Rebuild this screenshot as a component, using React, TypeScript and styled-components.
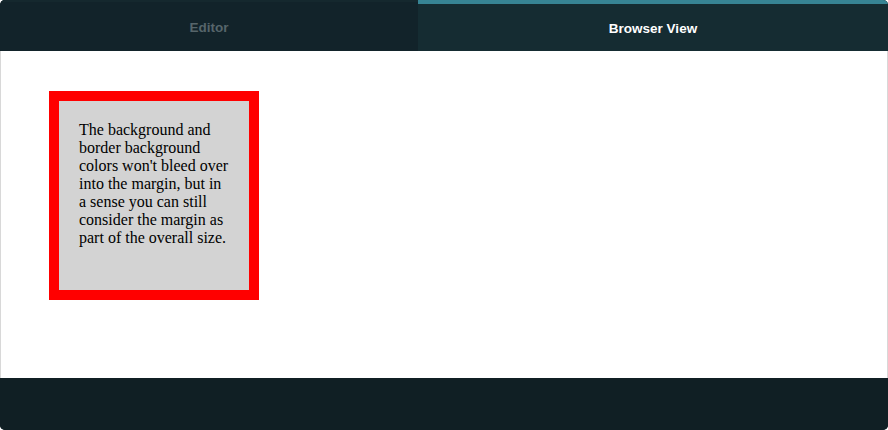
import styled, { createGlobalStyle } from "styled-components";

const GlobalStyle = createGlobalStyle`
  html, body {
    margin: 0;
    padding: 0;
    background: #ffffff;
  }
  #root {
    width: 888px;
    height: 430px;
  }
`;

// whole widget: dark frame with rounded corners
const Frame = styled.div`
  width: 888px;
  height: 430px;
  display: flex;
  flex-direction: column;
  border-radius: 5px;
  overflow: hidden;
  background: #101f24;
`;

const TabBar = styled.div`
  display: flex;
  height: 51px;
  flex: 0 0 auto;
`;

// active tab gets the teal strip on top
const Tab = styled.div<{ $active?: boolean }>`
  display: flex;
  align-items: center;
  justify-content: center;
  box-sizing: border-box;
  width: ${(p) => (p.$active ? "470px" : "418px")};
  padding-top: 2px;
  border-top: ${(p) => (p.$active ? "4px solid #378494" : "2px solid #15282e")};
  background: ${(p) => (p.$active ? "#152c32" : "#12232a")};
  color: ${(p) => (p.$active ? "#ffffff" : "#56656a")};
  font-family: "Liberation Sans", Arial, sans-serif;
  font-weight: bold;
  font-size: 13.5px;
`;

const Viewport = styled.div`
  flex: 0 0 327px;
  background: #ffffff;
  border-left: 1px solid #d8d8d8;
  border-right: 1px solid #d8d8d8;
  box-sizing: border-box;
  padding: 40px 40px 40px 48px;
`;

// the demo box from the lesson
const DemoBox = styled.div`
  width: 150px;
  height: 149px;
  padding: 20px;
  border: 10px solid #ff0000;
  background: #d3d3d3;
  font-family: "Liberation Serif", "Times New Roman", serif;
  font-size: 16px;
  line-height: 18px;
  color: #000000;
`;

const Footer = styled.div`
  flex: 1 1 auto;
  background: #101f24;
`;

const App = () => {
  return (
    <>
      <GlobalStyle />
      <Frame>
        <TabBar>
          <Tab>Editor</Tab>
          <Tab $active>Browser View</Tab>
        </TabBar>
        <Viewport>
          <DemoBox>
            The background and border background colors won't bleed over into
            the margin, but in a sense you can still consider the margin as part
            of the overall size.
          </DemoBox>
        </Viewport>
        <Footer />
      </Frame>
    </>
  );
};

export default App;
